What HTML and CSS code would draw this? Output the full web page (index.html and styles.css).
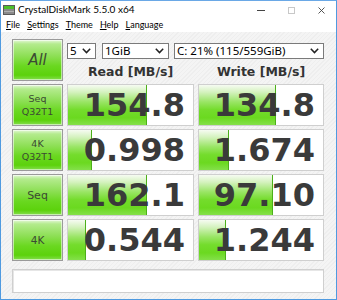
FILE: index.html
```html
<!DOCTYPE html>
<html>
<head>
<meta charset="utf-8">
<link rel="stylesheet" href="styles.css">
</head>
<body>
<div class="window">
  <div class="titlebar">
    <svg class="appicon" width="12" height="10" viewBox="0 0 12 10">
      <rect x="0.5" y="0.5" width="11" height="9" fill="#8a8a8a" stroke="#5a5a5a"/>
      <rect x="1" y="1" width="10" height="3" fill="#4cc02a"/>
      <rect x="1" y="6" width="10" height="1" fill="#b0b0b0"/>
    </svg>
    <span class="title">CrystalDiskMark 5.5.0 x64</span>
    <div class="controls">
      <svg width="8" height="8" viewBox="0 0 8 8"><line x1="0" y1="4.5" x2="8" y2="4.5" stroke="#444" stroke-width="1"/></svg>
      <svg width="7" height="7" viewBox="0 0 7 7"><rect x="0.5" y="0.5" width="6" height="6" fill="none" stroke="#c8c8c8" stroke-width="1"/></svg>
      <svg width="7" height="7" viewBox="0 0 7 7"><path d="M0.5 0.5 L6.5 6.5 M6.5 0.5 L0.5 6.5" stroke="#444" stroke-width="0.9"/></svg>
    </div>
  </div>
  <div class="menubar">
    <span><u>F</u>ile</span>
    <span><u>S</u>ettings</span>
    <span><u>T</u>heme</span>
    <span><u>H</u>elp</span>
    <span><u>L</u>anguage</span>
  </div>
  <div class="content">
    <div class="grid">
      <div class="btn btn-all">All</div>
      <div class="selects">
        <div class="sel sel-count"><span>5</span><svg class="chev" width="9" height="6" viewBox="0 0 9 6"><path d="M0.8 0.8 L4.5 4.6 L8.2 0.8" fill="none" stroke="#222" stroke-width="1.5"/></svg></div>
        <div class="sel sel-size"><span>1GiB</span><svg class="chev" width="9" height="6" viewBox="0 0 9 6"><path d="M0.8 0.8 L4.5 4.6 L8.2 0.8" fill="none" stroke="#222" stroke-width="1.5"/></svg></div>
        <div class="sel sel-drive"><span>C: 21% (115/559GiB)</span><svg class="chev" width="9" height="6" viewBox="0 0 9 6"><path d="M0.8 0.8 L4.5 4.6 L8.2 0.8" fill="none" stroke="#222" stroke-width="1.5"/></svg></div>
      </div>
      <div class="head">Read [MB/s]</div>
      <div class="head">Write [MB/s]</div>

      <div class="btn btn-small">Seq<br>Q32T1</div>
      <div class="cell"><div class="bar" style="width:79px"></div><span class="val">154.8</span></div>
      <div class="cell"><div class="bar" style="width:77px"></div><span class="val">134.8</span></div>

      <div class="btn btn-small">4K<br>Q32T1</div>
      <div class="cell"><div class="bar" style="width:24px"></div><span class="val">0.998</span></div>
      <div class="cell"><div class="bar" style="width:30px"></div><span class="val">1.674</span></div>

      <div class="btn btn-mid">Seq</div>
      <div class="cell"><div class="bar" style="width:79px"></div><span class="val">162.1</span></div>
      <div class="cell"><div class="bar" style="width:74px"></div><span class="val">97.10</span></div>

      <div class="btn btn-mid btn-4k">4K</div>
      <div class="cell"><div class="bar" style="width:18px"></div><span class="val">0.544</span></div>
      <div class="cell"><div class="bar" style="width:27px"></div><span class="val">1.244</span></div>
    </div>
    <div class="comment"></div>
  </div>
</div>
</body>
</html>
```
FILE: styles.css
```css
html, body {
  margin: 0;
  padding: 0;
  background: #ffffff;
}
.window {
  width: 337px;
  height: 300px;
  box-sizing: border-box;
  border: 1px solid #4f9ae0;
  border-top-color: #6aa8e6;
  display: flex;
  flex-direction: column;
  background: #f2f2f2;
  font-family: "Noto Sans", "DejaVu Sans", sans-serif;
}
.titlebar {
  height: 17px;
  background: #ffffff;
  display: flex;
  align-items: center;
  padding-left: 2px;
}
.appicon {
  display: block;
}
.title {
  margin-left: 3px;
  font-family: Lato, "Noto Sans", sans-serif;
  font-size: 10px;
  color: #000;
  line-height: 17px;
}
.controls {
  margin-left: auto;
  display: flex;
  align-items: center;
  gap: 23px;
  padding-right: 11px;
  padding-top: 1px;
}
.controls svg {
  display: block;
}
.menubar {
  height: 13px;
  background: #ffffff;
  display: flex;
  align-items: center;
  gap: 7px;
  padding-left: 5px;
  font-family: Lato, "Noto Sans", sans-serif;
  font-size: 9px;
  color: #000;
  padding-bottom: 1px;
}
.menubar span {
  line-height: 13px;
}
.menubar u {
  text-decoration-thickness: 1px;
  text-underline-offset: 1px;
}
.content {
  flex: 1;
  padding: 7px 11px 0 11px;
  display: flex;
  flex-direction: column;
  background: repeating-linear-gradient(135deg, #f4f4f4 0px, #f4f4f4 2px, #eeeeee 2px, #eeeeee 3px);
}
.grid {
  display: grid;
  grid-template-columns: 51px 127px 126px;
  grid-template-rows: 18px 21px repeat(4, 42px);
  column-gap: 4px;
  row-gap: 3px;
}
.btn {
  box-sizing: border-box;
  border: 1px solid #9a9a9a;
  background: linear-gradient(to bottom, #e4f7d8 0%, #b4eb8e 10%, #8ddf55 40%, #6ad820 65%, #5cd20c 88%, #86de50 100%);
  display: flex;
  align-items: center;
  justify-content: center;
  text-align: center;
  color: #3b4a33;
  font-family: "DejaVu Sans", sans-serif;
  box-shadow: inset 0 0 0 1px rgba(255,255,255,0.55);
}
.btn-all {
  grid-row: 1 / 3;
  font-size: 15px;
  font-style: italic;
}
.btn-small {
  font-size: 9.5px;
  line-height: 13px;
}
.btn-mid {
  font-size: 11px;
}
.btn-4k {
  font-size: 10.5px;
}
.selects {
  grid-column: 2 / 4;
  display: flex;
  align-items: flex-end;
  gap: 6px;
}
.sel {
  height: 16px;
  box-sizing: border-box;
  border: 1px solid #7a7a7a;
  background: #ffffff;
  display: flex;
  align-items: center;
  justify-content: space-between;
  padding: 0 4px 0 2px;
  font-size: 11.5px;
  color: #000;
  margin-bottom: -2px;
}
.sel span {
  line-height: 14px;
}
.chev {
  display: block;
}
.sel-count { width: 29px; }
.sel-size { width: 67px; }
.sel-drive { width: 150px; margin-left: -1px; }
.head {
  display: flex;
  align-items: flex-end;
  justify-content: center;
  font-family: "DejaVu Sans", sans-serif;
  font-weight: bold;
  font-size: 12.5px;
  color: #333333;
  padding-bottom: 2px;
}
.cell {
  position: relative;
  box-sizing: border-box;
  border: 1px solid #cfcfcf;
  background: #ffffff;
  display: flex;
  align-items: center;
  justify-content: flex-end;
  padding-right: 8px;
  overflow: hidden;
}
.bar {
  position: absolute;
  left: 0;
  top: 0;
  bottom: 0;
  box-sizing: border-box;
  border-right: 1px solid #4caf1a;
  background: linear-gradient(to bottom, #f6fbf2 0%, #d4f2be 18%, #9ae566 42%, #74dc2c 62%, #6bd920 82%, #84e04a 100%);
}
.val {
  position: relative;
  font-family: "DejaVu Sans", sans-serif;
  font-weight: bold;
  font-size: 32px;
  line-height: 36px;
  color: #3a3a3a;
}
.comment {
  margin-top: 8px;
  width: 312px;
  height: 24px;
  box-sizing: border-box;
  border: 1px solid #cfcfcf;
  background: #ffffff;
  box-shadow: inset 1px 1px 0 #e6e6e6;
}
```
